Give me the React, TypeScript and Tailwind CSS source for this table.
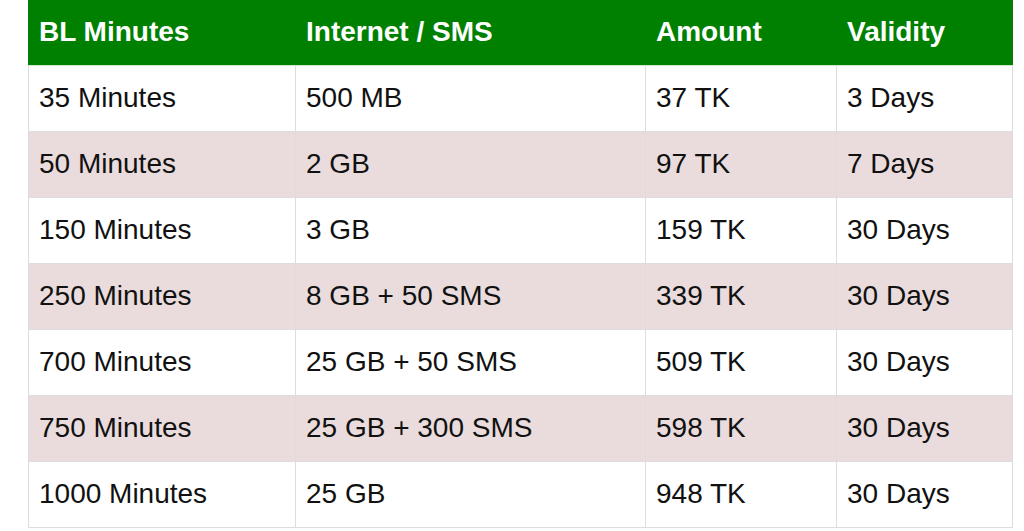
import React from "react";

const rows = [
  ["35 Minutes", "500 MB", "37 TK", "3 Days"],
  ["50 Minutes", "2 GB", "97 TK", "7 Days"],
  ["150 Minutes", "3 GB", "159 TK", "30 Days"],
  ["250 Minutes", "8 GB + 50 SMS", "339 TK", "30 Days"],
  ["700 Minutes", "25 GB + 50 SMS", "509 TK", "30 Days"],
  ["750 Minutes", "25 GB + 300 SMS", "598 TK", "30 Days"],
  ["1000 Minutes", "25 GB", "948 TK", "30 Days"],
];

export default function App() {
  return (
    <div className="w-[1024px] h-[531px] bg-white overflow-hidden pl-[28px]" style={{ fontFamily: '"Liberation Sans", Arial, sans-serif' }}>
      <table className="table-fixed border-collapse w-[984px] text-[28px] text-[#111]">
        <colgroup>
          <col className="w-[267px]" />
          <col className="w-[350px]" />
          <col className="w-[191px]" />
          <col className="w-[176px]" />
        </colgroup>
        <thead>
          <tr className="bg-[#008000] text-white h-[65px]">
            {["BL Minutes", "Internet / SMS", "Amount", "Validity"].map((h) => (
              <th key={h} className="text-left font-bold px-[10px] border-x border-[#0a7a0a] border-b border-b-[#cfe8cf] leading-none">
                {h}
              </th>
            ))}
          </tr>
        </thead>
        <tbody>
          {rows.map((r, i) => (
            <tr key={i} className={`h-[66px] ${i % 2 === 1 ? "bg-[#eadcdc]" : "bg-white"}`}>
              {r.map((c, j) => (
                <td key={j} className="px-[10px] border border-[#dddddd] leading-none">
                  {c}
                </td>
              ))}
            </tr>
          ))}
        </tbody>
      </table>
    </div>
  );
}
